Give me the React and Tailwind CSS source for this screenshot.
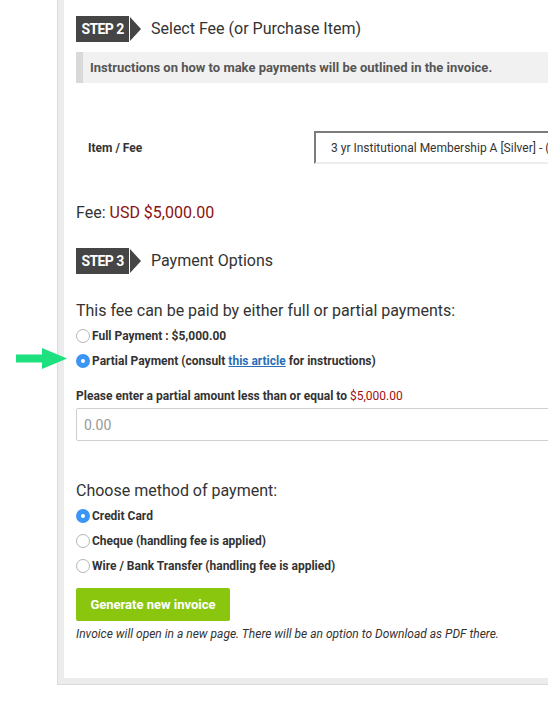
const Radio = ({ checked }) =>
  checked ? (
    <span className="flex h-[14px] w-[14px] shrink-0 items-center justify-center rounded-full bg-[#3b95f5]">
      <span className="h-[4px] w-[4px] rounded-full bg-white" />
    </span>
  ) : (
    <span className="h-[14px] w-[14px] shrink-0 rounded-full border border-[#b5b5b5] bg-white" />
  );

const StepHeader = ({ step, title }) => (
  <div className="flex h-[26px] items-center">
    <div className="flex h-full w-[53px] items-center justify-center bg-[#454545] text-[14px] font-bold tracking-[-0.6px] text-white">
      STEP {step}
    </div>
    <svg className="ml-px h-[26px] w-[11px]" viewBox="0 0 11 26">
      <polygon points="0,1 11,13 0,25" fill="#454545" />
    </svg>
    <span className="ml-[10px] text-[16px] text-[#333]">{title}</span>
  </div>
);

const Option = ({ checked, children }) => (
  <label className="flex h-[25px] items-center gap-[2px] text-[12px] font-bold text-[#333]">
    <Radio checked={checked} />
    <span>{children}</span>
  </label>
);

export default function App() {
  return (
    <div className="h-[703px] w-[548px] overflow-hidden bg-white font-['Roboto',sans-serif] text-[#333]">
      <div className="relative ml-[57px] w-[560px] border-b border-l border-[#dadada] bg-[#ececec] pb-[6px] pl-[6px]">
        {/* green pointer arrow */}
        <svg className="absolute left-[-42px] top-[348px] h-[21px] w-[51px]" viewBox="0 0 51 21">
          <rect x="0" y="6.5" width="27" height="8" fill="#1de07f" />
          <polygon points="26,0 51,10.5 26,21" fill="#1de07f" />
        </svg>

        <div className="bg-white pb-[36px] pl-[12px] pt-[16px]">
          <StepHeader step="2" title="Select Fee (or Purchase Item)" />

          <div className="mt-[10px] flex h-[31px] items-center border-l-[7px] border-[#d9d9d9] bg-[#f1f1f1] pl-[7px] text-[13px] font-bold text-[#555]">
            Instructions on how to make payments will be outlined in the invoice.
          </div>

          <div className="mt-[48px] flex items-center">
            <span className="w-[238px] shrink-0 pl-[12px] text-[12px] font-bold text-[#333]">Item / Fee</span>
            <div className="flex h-[33px] min-w-0 flex-1 items-center overflow-hidden whitespace-nowrap border-2 border-b-[#ededed] border-l-[#7c7c7c] border-r-[#ededed] border-t-[#7c7c7c] pl-[15px] text-[12px] text-[#333]">
              3 yr Institutional Membership A [Silver] - (USD) $5,000.00
            </div>
          </div>

          <p className="mt-[37px] text-[16px] leading-[24px]">
            Fee: <span className="text-[#8b1010]">USD $5,000.00</span>
          </p>

          <div className="mt-[23px]">
            <StepHeader step="3" title="Payment Options" />
          </div>

          <p className="mt-[25px] text-[16px] leading-[24px]">
            This fee can be paid by either full or partial payments:
          </p>
          <Option>Full Payment : $5,000.00</Option>
          <Option checked>
            Partial Payment (consult{" "}
            <a href="#" className="text-[#2a6db5] underline">
              this article
            </a>{" "}
            for instructions)
          </Option>

          <p className="mt-[15px] text-[12px] font-bold leading-[16px]">
            Please enter a partial amount less than or equal to{" "}
            <span className="font-normal text-[#a00f0f]">$5,000.00</span>
          </p>
          <input
            placeholder="0.00"
            className="mt-[4px] block h-[33px] w-full rounded-[2px] border border-[#cfcfcf] px-[7px] text-[14px] text-[#333] placeholder:text-[#999] outline-none"
          />

          <p className="mt-[38px] text-[16px] leading-[24px]">Choose method of payment:</p>
          <Option checked>Credit Card</Option>
          <Option>Cheque (handling fee is applied)</Option>
          <Option>Wire / Bank Transfer (handling fee is applied)</Option>

          <button className="mt-[10px] flex h-[33px] w-[154px] items-center justify-center rounded-[2px] bg-[#8bc60f] text-[13px] font-bold text-white">
            Generate new invoice
          </button>
          <p className="mt-[5px] text-[12px] italic leading-[16px] text-[#333]">
            Invoice will open in a new page. There will be an option to Download as PDF there.
          </p>
        </div>
      </div>
    </div>
  );
}
